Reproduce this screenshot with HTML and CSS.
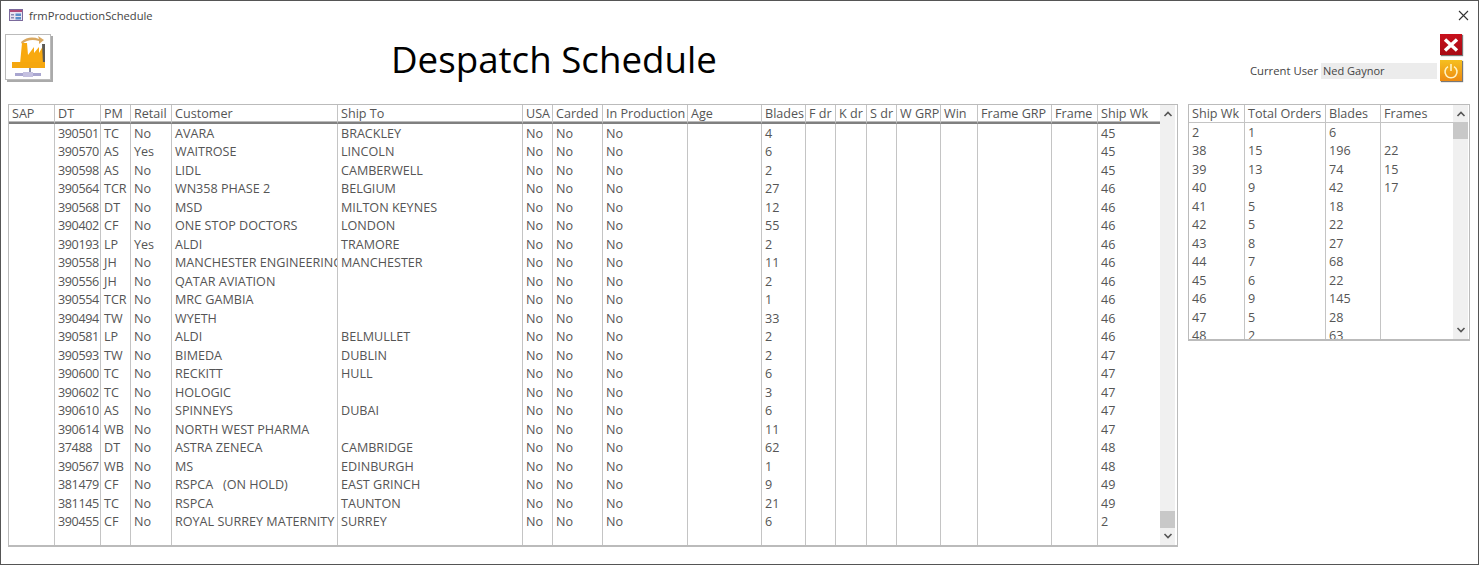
FILE: index.html
```html
<!DOCTYPE html>
<html lang="en">
<head>
    <meta charset="UTF-8">
    <meta name="viewport" content="width=device-width, initial-scale=1.0">
    <title>frmProductionSchedule</title>
    <link rel="stylesheet" href="styles.css">
</head>
<body>
    <div class="window">
        <div class="title-bar">
            <svg class="form-icon" viewBox="0 0 14 12" width="14" height="12">
                <rect x="0.5" y="0.5" width="13" height="11" fill="#e8e4f2" stroke="#7b6a9c"/>
                <rect x="1" y="1" width="12" height="2" fill="#b04a78"/>
                <rect x="2" y="5" width="3" height="1.5" fill="#8a8ab0"/>
                <rect x="2" y="8" width="3" height="1.5" fill="#8a8ab0"/>
                <rect x="6.5" y="4.5" width="5.5" height="2.5" fill="#5b8fc9"/>
                <rect x="6.5" y="8" width="5.5" height="2.5" fill="#5b8fc9"/>
            </svg>
            <span class="title-text">frmProductionSchedule</span>
            <svg class="close-x" viewBox="0 0 11 11" width="11" height="11">
                <path d="M1 1L10 10M10 1L1 10" stroke="#333" stroke-width="1.1" fill="none"/>
            </svg>
        </div>

        <div class="top-row">
            <button class="logo-btn">
                <svg viewBox="0 0 38 42" width="38" height="42">
                    <path d="M12 6Q20 -1 30 3L29 0L35 4L30 8L30 5Q20 2 13 8Z" fill="#d9a860"/>
                    <path d="M11 28L13 7H18L19 19L25 11V17L30 11V17L34 10V28Z" fill="#f8a90f"/>
                    <path d="M33 8H36V28H34Z" fill="#5c5a55"/>
                    <rect x="3" y="26" width="33" height="6" fill="#f5a70f"/>
                    <rect x="20" y="32" width="2" height="5" fill="#8a8fa8"/>
                    <rect x="6" y="37" width="26" height="3" fill="#a9a6d0"/>
                    <rect x="14" y="36" width="10" height="5" fill="#c4c0e0"/>
                </svg>
            </button>
            <h1 class="heading">Despatch Schedule</h1>
            <div class="user-box">
                <span class="user-label">Current User</span>
                <span class="user-field">Ned Gaynor</span>
            </div>
            <div class="action-btns">
                <button class="action-btn btn-red">
                    <svg viewBox="0 0 16 14" width="16" height="14">
                        <path d="M2 1.5L14 12.5M14 1.5L2 12.5" stroke="#fff" stroke-width="3.4" fill="none"/>
                    </svg>
                </button>
                <button class="action-btn btn-orange">
                    <svg viewBox="0 0 16 16" width="16" height="16">
                        <path d="M5 3.6A6 6 0 1 0 11 3.6" stroke="#fff3c4" stroke-width="1.6" fill="none"/>
                        <path d="M8 1V8" stroke="#fff3c4" stroke-width="1.6" fill="none"/>
                    </svg>
                </button>
            </div>
        </div>

        <div class="tables">
            <div class="list-box list-main">
                <table class="grid grid-main">
                    <colgroup>
                        <col class="c46"><col class="c46"><col class="c30"><col class="c41"><col class="c166"><col class="c185">
                        <col class="c30"><col class="c50"><col class="c85"><col class="c74"><col class="c44"><col class="c30">
                        <col class="c31"><col class="c30"><col class="c44"><col class="c37"><col class="c74"><col class="c46"><col class="c62">
                    </colgroup>
                    <thead>
                        <tr><th>SAP</th><th>DT</th><th>PM</th><th>Retail</th><th>Customer</th><th>Ship To</th><th>USA</th><th>Carded</th><th>In Production</th><th>Age</th><th>Blades</th><th>F dr</th><th>K dr</th><th>S dr</th><th>W GRP</th><th>Win</th><th>Frame GRP</th><th>Frame</th><th>Ship Wk</th></tr>
                    </thead>
                    <tbody>
                        <tr><td></td><td>390501</td><td>TC</td><td>No</td><td>AVARA</td><td>BRACKLEY</td><td>No</td><td>No</td><td>No</td><td></td><td>4</td><td></td><td></td><td></td><td></td><td></td><td></td><td></td><td>45</td></tr>
                        <tr><td></td><td>390570</td><td>AS</td><td>Yes</td><td>WAITROSE</td><td>LINCOLN</td><td>No</td><td>No</td><td>No</td><td></td><td>6</td><td></td><td></td><td></td><td></td><td></td><td></td><td></td><td>45</td></tr>
                        <tr><td></td><td>390598</td><td>AS</td><td>No</td><td>LIDL</td><td>CAMBERWELL</td><td>No</td><td>No</td><td>No</td><td></td><td>2</td><td></td><td></td><td></td><td></td><td></td><td></td><td></td><td>45</td></tr>
                        <tr><td></td><td>390564</td><td>TCR</td><td>No</td><td>WN358 PHASE 2</td><td>BELGIUM</td><td>No</td><td>No</td><td>No</td><td></td><td>27</td><td></td><td></td><td></td><td></td><td></td><td></td><td></td><td>46</td></tr>
                        <tr><td></td><td>390568</td><td>DT</td><td>No</td><td>MSD</td><td>MILTON KEYNES</td><td>No</td><td>No</td><td>No</td><td></td><td>12</td><td></td><td></td><td></td><td></td><td></td><td></td><td></td><td>46</td></tr>
                        <tr><td></td><td>390402</td><td>CF</td><td>No</td><td>ONE STOP DOCTORS</td><td>LONDON</td><td>No</td><td>No</td><td>No</td><td></td><td>55</td><td></td><td></td><td></td><td></td><td></td><td></td><td></td><td>46</td></tr>
                        <tr><td></td><td>390193</td><td>LP</td><td>Yes</td><td>ALDI</td><td>TRAMORE</td><td>No</td><td>No</td><td>No</td><td></td><td>2</td><td></td><td></td><td></td><td></td><td></td><td></td><td></td><td>46</td></tr>
                        <tr><td></td><td>390558</td><td>JH</td><td>No</td><td>MANCHESTER ENGINEERING</td><td>MANCHESTER</td><td>No</td><td>No</td><td>No</td><td></td><td>11</td><td></td><td></td><td></td><td></td><td></td><td></td><td></td><td>46</td></tr>
                        <tr><td></td><td>390556</td><td>JH</td><td>No</td><td>QATAR AVIATION</td><td></td><td>No</td><td>No</td><td>No</td><td></td><td>2</td><td></td><td></td><td></td><td></td><td></td><td></td><td></td><td>46</td></tr>
                        <tr><td></td><td>390554</td><td>TCR</td><td>No</td><td>MRC GAMBIA</td><td></td><td>No</td><td>No</td><td>No</td><td></td><td>1</td><td></td><td></td><td></td><td></td><td></td><td></td><td></td><td>46</td></tr>
                        <tr><td></td><td>390494</td><td>TW</td><td>No</td><td>WYETH</td><td></td><td>No</td><td>No</td><td>No</td><td></td><td>33</td><td></td><td></td><td></td><td></td><td></td><td></td><td></td><td>46</td></tr>
                        <tr><td></td><td>390581</td><td>LP</td><td>No</td><td>ALDI</td><td>BELMULLET</td><td>No</td><td>No</td><td>No</td><td></td><td>2</td><td></td><td></td><td></td><td></td><td></td><td></td><td></td><td>46</td></tr>
                        <tr><td></td><td>390593</td><td>TW</td><td>No</td><td>BIMEDA</td><td>DUBLIN</td><td>No</td><td>No</td><td>No</td><td></td><td>2</td><td></td><td></td><td></td><td></td><td></td><td></td><td></td><td>47</td></tr>
                        <tr><td></td><td>390600</td><td>TC</td><td>No</td><td>RECKITT</td><td>HULL</td><td>No</td><td>No</td><td>No</td><td></td><td>6</td><td></td><td></td><td></td><td></td><td></td><td></td><td></td><td>47</td></tr>
                        <tr><td></td><td>390602</td><td>TC</td><td>No</td><td>HOLOGIC</td><td></td><td>No</td><td>No</td><td>No</td><td></td><td>3</td><td></td><td></td><td></td><td></td><td></td><td></td><td></td><td>47</td></tr>
                        <tr><td></td><td>390610</td><td>AS</td><td>No</td><td>SPINNEYS</td><td>DUBAI</td><td>No</td><td>No</td><td>No</td><td></td><td>6</td><td></td><td></td><td></td><td></td><td></td><td></td><td></td><td>47</td></tr>
                        <tr><td></td><td>390614</td><td>WB</td><td>No</td><td>NORTH WEST PHARMA</td><td></td><td>No</td><td>No</td><td>No</td><td></td><td>11</td><td></td><td></td><td></td><td></td><td></td><td></td><td></td><td>47</td></tr>
                        <tr><td></td><td>37488</td><td>DT</td><td>No</td><td>ASTRA ZENECA</td><td>CAMBRIDGE</td><td>No</td><td>No</td><td>No</td><td></td><td>62</td><td></td><td></td><td></td><td></td><td></td><td></td><td></td><td>48</td></tr>
                        <tr><td></td><td>390567</td><td>WB</td><td>No</td><td>MS</td><td>EDINBURGH</td><td>No</td><td>No</td><td>No</td><td></td><td>1</td><td></td><td></td><td></td><td></td><td></td><td></td><td></td><td>48</td></tr>
                        <tr><td></td><td>381479</td><td>CF</td><td>No</td><td>RSPCA &nbsp; (ON HOLD)</td><td>EAST GRINCH</td><td>No</td><td>No</td><td>No</td><td></td><td>9</td><td></td><td></td><td></td><td></td><td></td><td></td><td></td><td>49</td></tr>
                        <tr><td></td><td>381145</td><td>TC</td><td>No</td><td>RSPCA</td><td>TAUNTON</td><td>No</td><td>No</td><td>No</td><td></td><td>21</td><td></td><td></td><td></td><td></td><td></td><td></td><td></td><td>49</td></tr>
                        <tr><td></td><td>390455</td><td>CF</td><td>No</td><td>ROYAL SURREY MATERNITY</td><td>SURREY</td><td>No</td><td>No</td><td>No</td><td></td><td>6</td><td></td><td></td><td></td><td></td><td></td><td></td><td></td><td>2</td></tr>
                        <tr class="filler"><td></td><td></td><td></td><td></td><td></td><td></td><td></td><td></td><td></td><td></td><td></td><td></td><td></td><td></td><td></td><td></td><td></td><td></td><td></td></tr>
                    </tbody>
                </table>
                <div class="scrollbar">
                    <svg class="chevron" viewBox="0 0 10 6" width="10" height="6"><path d="M1.5 5L5 1.5L8.5 5" stroke="#555" stroke-width="1.6" fill="none"/></svg>
                    <div class="thumb thumb-end"></div>
                    <svg class="chevron" viewBox="0 0 10 6" width="10" height="6"><path d="M1.5 1L5 4.5L8.5 1" stroke="#555" stroke-width="1.6" fill="none"/></svg>
                </div>
            </div>

            <div class="list-box list-side">
                <table class="grid grid-side">
                    <colgroup>
                        <col class="c56"><col class="c81"><col class="c55"><col class="c72">
                    </colgroup>
                    <thead>
                        <tr><th>Ship Wk</th><th>Total Orders</th><th>Blades</th><th>Frames</th></tr>
                    </thead>
                    <tbody>
                        <tr><td>2</td><td>1</td><td>6</td><td></td></tr>
                        <tr><td>38</td><td>15</td><td>196</td><td>22</td></tr>
                        <tr><td>39</td><td>13</td><td>74</td><td>15</td></tr>
                        <tr><td>40</td><td>9</td><td>42</td><td>17</td></tr>
                        <tr><td>41</td><td>5</td><td>18</td><td></td></tr>
                        <tr><td>42</td><td>5</td><td>22</td><td></td></tr>
                        <tr><td>43</td><td>8</td><td>27</td><td></td></tr>
                        <tr><td>44</td><td>7</td><td>68</td><td></td></tr>
                        <tr><td>45</td><td>6</td><td>22</td><td></td></tr>
                        <tr><td>46</td><td>9</td><td>145</td><td></td></tr>
                        <tr><td>47</td><td>5</td><td>28</td><td></td></tr>
                        <tr><td>48</td><td>2</td><td>63</td><td></td></tr>
                    </tbody>
                </table>
                <div class="scrollbar">
                    <svg class="chevron" viewBox="0 0 10 6" width="10" height="6"><path d="M1.5 5L5 1.5L8.5 5" stroke="#555" stroke-width="1.6" fill="none"/></svg>
                    <div class="thumb thumb-start"></div>
                    <svg class="chevron" viewBox="0 0 10 6" width="10" height="6"><path d="M1.5 1L5 4.5L8.5 1" stroke="#555" stroke-width="1.6" fill="none"/></svg>
                </div>
            </div>
        </div>
    </div>
</body>
</html>
```

FILE: styles.css
```css
body {
    font-family: "Open Sans", "Noto Sans", Arial, sans-serif;
    margin: 0;
    background-color: #fff;
    overflow: hidden;
}
.window {
    box-sizing: border-box;
    width: 1479px;
    height: 565px;
    border: 1px solid #555;
}

/* title bar */
.title-bar {
    display: flex;
    align-items: center;
    height: 28px;
    padding: 0 9px 0 8px;
}
.form-icon {
    margin-right: 6px;
}
.title-text {
    font-size: 11.2px;
    color: #444;
}
.close-x {
    margin-left: auto;
}

/* logo, heading, user */
.top-row {
    box-sizing: border-box;
    display: flex;
    align-items: flex-start;
    height: 75px;
    padding: 5px 16px 0 4px;
}
.logo-btn {
    display: flex;
    align-items: center;
    justify-content: center;
    width: 46px;
    height: 46px;
    padding: 0;
    background-color: #fff;
    border: 1px solid #bbb;
    box-shadow: 2px 2px 0 #aaa;
}
.heading {
    margin: 2px 0 0 340px;
    font-size: 36.7px;
    font-weight: 400;
    line-height: 46px;
    color: #000;
}
.user-box {
    display: flex;
    align-items: center;
    margin: 29px 3px 0 auto;
    height: 16px;
}
.user-label {
    font-size: 11.3px;
    color: #444;
    margin: 0 3px 2px 0;
}
.user-field {
    width: 114px;
    padding-left: 2px;
    height: 16px;
    line-height: 16px;
    font-size: 11px;
    color: #444;
    background-color: #ececec;
}
.action-btns {
    display: flex;
    flex-direction: column;
    gap: 5px;
}
.action-btn {
    display: flex;
    align-items: center;
    justify-content: center;
    width: 22px;
    height: 21px;
    padding: 0;
    border: none;
    box-shadow: 1px 1px 1px #777;
}
.btn-red {
    background: linear-gradient(#c8101c, #a80a14);
}
.btn-orange {
    background: linear-gradient(#f5c020, #ee8a10);
}

/* lists */
.tables {
    display: flex;
    align-items: flex-start;
    gap: 10px;
    padding-left: 7px;
}
.list-box {
    display: flex;
    box-sizing: border-box;
    border: 1px solid #bbb;
    border-bottom-width: 2px;
    overflow: hidden;
    background-color: #fff;
}
.list-main {
    width: 1170px;
    height: 443px;
}
.list-side {
    width: 282px;
    height: 237px;
}
.grid {
    table-layout: fixed;
    border-collapse: separate;
    border-spacing: 0;
    flex: none;
    font-size: 12.6px;
    color: #555;
    align-self: flex-start;
}
.grid-main {
    width: 1151px;
}
.grid-side {
    width: 264px;
}
.grid th,
.grid td {
    box-sizing: border-box;
    height: 18.5px;
    padding: 0 0 0 3px;
    overflow: hidden;
    white-space: nowrap;
    font-weight: 400;
    text-align: left;
    border-right: 1px solid #c4c4c4;
}
.grid th:last-child,
.grid-main td:last-child,
.grid-side td:last-child {
    border-right: none;
}
.grid-main td:nth-child(2) {
    letter-spacing: -0.4px;
}
.grid th {
    height: 18px;
    border-bottom: 2px solid #808080;
    box-shadow: inset 0 -1px 0 #bbb;
}
.grid-side th {
    border-bottom: 1px solid #c4c4c4;
    box-shadow: none;
}
.grid .filler td {
    height: 15px;
}
.c30 { width: 30px; }
.c31 { width: 31px; }
.c37 { width: 37px; }
.c41 { width: 41px; }
.c44 { width: 44px; }
.c46 { width: 46px; }
.c50 { width: 50px; }
.c55 { width: 55px; }
.c56 { width: 56px; }
.c62 { width: 62px; }
.c72 { width: 72px; }
.c74 { width: 74px; }
.c81 { width: 81px; }
.c85 { width: 85px; }
.c166 { width: 166px; }
.c185 { width: 185px; }

/* scrollbars */
.scrollbar {
    display: flex;
    flex-direction: column;
    align-items: center;
    width: 15px;
    background-color: #f0f0f0;
    padding: 6px 0;
    box-sizing: border-box;
}
.chevron {
    flex: none;
}
.thumb {
    flex: none;
    width: 15px;
    height: 17px;
    background-color: #c8c8c8;
}
.thumb-start {
    margin-top: 5px;
    margin-bottom: auto;
}
.thumb-end {
    margin-top: auto;
    margin-bottom: 5px;
}
```
